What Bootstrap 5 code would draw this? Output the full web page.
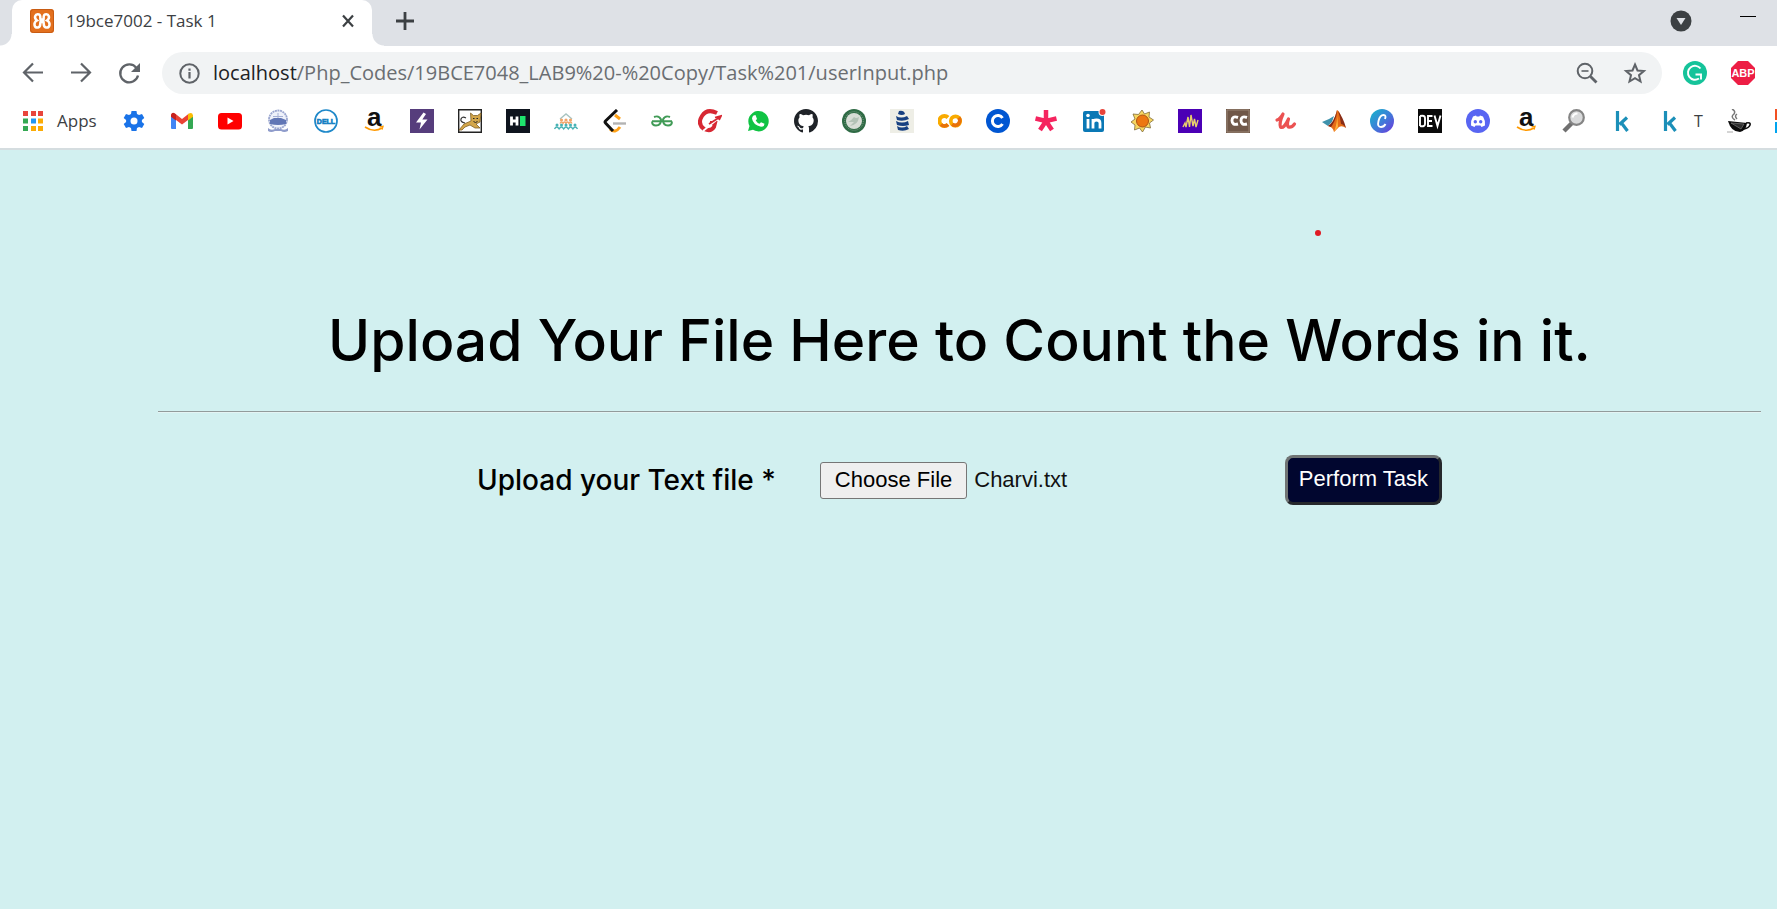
<!DOCTYPE html>
<html lang="en">
<head>
<meta charset="utf-8">
<meta name="viewport" content="width=device-width, initial-scale=1">
<title>19bce7002 - Task 1</title>
<link href="https://cdn.jsdelivr.net/npm/bootstrap@5.3.0/dist/css/bootstrap.min.css" rel="stylesheet">
<style>
  body { background: #d2f0f0; font-family: "Open Sans", "Noto Sans", sans-serif; color: #3c4043; overflow-x: hidden; }
  a { color: inherit; text-decoration: none; }
  svg { display: block; flex: none; }
  .plain { border: 0; background: none; padding: 0; color: #5f6368; }
  .tabstrip { background: #dee1e6; height: 46px; padding: 0 21px 0 12px; }
  .tab { position: relative; width: 360px; background: #fff; border-radius: 10px 10px 0 0; padding: 0 16px 4px 18px; font-size: 17px; }
  .tab::before, .tab::after { content: ""; position: absolute; bottom: 0; width: 12px; height: 12px; }
  .tab::before { left: -12px; background: radial-gradient(circle at 0 0, transparent 11px, #fff 12px); }
  .tab::after { right: -12px; background: radial-gradient(circle at 100% 0, transparent 11px, #fff 12px); }
  .toolbar { background: #fff; padding: 6px 22px 6px 21px; gap: 24px; }
  .omnibox { background: #f1f3f4; border-radius: 21px; height: 42px; padding: 0 15px; margin: 0 -3px; min-width: 0; }
  .address { font-size: 20px; line-height: 28px; color: #6a6e72; white-space: nowrap; overflow: hidden; }
  .address b { font-weight: 400; color: #202124; }
  .bookmarks { background: #fff; height: 50px; padding: 0 0 6px 21px; gap: 24px; overflow: hidden; border-bottom: 2px solid #d5dde0; font-size: 17px; }
  .bookmarks a { display: flex; align-items: center; gap: 12px; flex: none; }
  .apps-link { width: 77px; }
  .tee { width: 9px; font-size: 16px; }
  .task { position: relative; padding: 157px 16px 0 158px; color: #000; }
  .title { font: 500 57px/68px Inter, "Open Sans", sans-serif; margin: 0; }
  .rule { height: 2px; margin: 36px 0 42px; border: 0; border-top: 1px solid #929b9b; border-bottom: 1px solid #e4f4f4; opacity: 1; }
  .upload-row { gap: 44px; }
  .field-label { font: 500 28px/36px Inter, "Open Sans", sans-serif; }
  .picker { width: 421px; font: 22px/30px "Liberation Sans", Arial, sans-serif; color: #111; }
  .picker::file-selector-button { font: inherit; border: 1px solid #767676; border-radius: 3px; background: #efefef; color: #000; padding: 2px 14px 3px; margin-right: 7px; height: 37px; }
  .submit { font: 22px/28px "Liberation Sans", Arial, sans-serif; background: #01062f; color: #fff; border: 3px solid; border-color: #707474 #26282c #26282c #707474; border-radius: 8px; padding: 7px 11px 9px; white-space: nowrap; }
  .pen-dot { position: absolute; left: 74%; top: 80px; width: 6px; height: 6px; border-radius: 50%; background: #e01b24; }
  svg text { font-family: "Liberation Sans", Arial, sans-serif; font-weight: 700; }
</style>
</head>
<body>
<header>
  <div class="tabstrip d-flex align-items-stretch">
    <div class="tab d-flex align-items-center">
      <svg width="24" height="24" viewBox="0 0 24 24"><rect width="24" height="24" rx="3" fill="#e3701e"/><rect x=".5" y=".5" width="23" height="23" rx="3" fill="none" stroke="#c75b13"/><path d="M9 5.500C5 4.500 3.500 9 7 11.500 3 13.500 4 19 8 18.500 11 18 10 14.500 10.500 13h3c.5 1.500-.5 5 2.500 5.500 4 .5 5-5 1-7C20.500 9 19 4.500 15 5.500c-2 .5-1 3.500-1.500 5h-3C10 9 11 6 9 5.500z" fill="none" stroke="#fff" stroke-width="2.500"/></svg>
      <span class="ms-2 ps-1 flex-grow-1">19bce7002 - Task 1</span>
      <button class="plain" aria-label="Close tab"><svg width="16" height="16" viewBox="0 0 16 16"><path d="M3 2.500l10 11M13 2.500L3 13.500" stroke="#3c4043" stroke-width="2.200"/></svg></button>
    </div>
    <button class="plain ms-4" aria-label="New tab"><svg width="18" height="24" viewBox="0 0 18 24"><path d="M9 1v18M0 10h18" stroke="#3c4043" stroke-width="2.800"/></svg></button>
    <button class="plain ms-auto me-5" aria-label="Search tabs"><svg width="22" height="26" viewBox="0 0 22 26"><circle cx="11" cy="11" r="10.500" fill="#3c4043"/><path d="M6.500 8h9L11 15z" fill="#dee1e6"/></svg></button>
    <button class="plain" aria-label="Minimize"><svg width="16" height="32" viewBox="0 0 16 32"><path d="M0 9.500h16" stroke="#000"/></svg></button>
  </div>

  <div class="toolbar d-flex align-items-center">
    <button class="plain" aria-label="Back"><svg width="24" height="24" viewBox="0 0 24 24"><path d="M22 11.500H3.500M12 2.500l-9 9 9 9" fill="none" stroke="#5f6368" stroke-width="2.200"/></svg></button>
    <button class="plain" aria-label="Forward"><svg width="24" height="24" viewBox="0 0 24 24"><path d="M2 11.500h18.500M12 2.500l9 9-9 9" fill="none" stroke="#5f6368" stroke-width="2.200"/></svg></button>
    <button class="plain" aria-label="Reload"><svg width="24" height="24" viewBox="0 0 24 24"><path d="M21 14.500A9 9 0 1 1 19.500 7" fill="none" stroke="#5f6368" stroke-width="2.300"/><path d="M23 2v9h-9z" fill="#5f6368"/></svg></button>
    <div class="omnibox d-flex align-items-center flex-grow-1">
      <svg width="24" height="24" viewBox="0 0 24 24"><circle cx="12.500" cy="12.500" r="9.200" fill="none" stroke="#5f6368" stroke-width="2"/><path d="M12.500 11v6.500M12.500 7.500v2.200" stroke="#5f6368" stroke-width="2.200"/></svg>
      <span class="address ms-2 ps-1 me-auto"><b>localhost</b>/Php_Codes/19BCE7048_LAB9%20-%20Copy/Task%201/userInput.php</span>
      <button class="plain me-4" aria-label="Zoom"><svg width="24" height="24" viewBox="0 0 24 24"><circle cx="10" cy="10" r="7.300" fill="none" stroke="#5f6368" stroke-width="2"/><path d="M6.500 10h7" stroke="#5f6368" stroke-width="1.600"/><path d="M15.500 15.500l6 6" stroke="#5f6368" stroke-width="2.800"/></svg></button>
      <button class="plain" aria-label="Bookmark this tab"><svg width="24" height="24" viewBox="0 0 24 24"><path d="M12 3.500l2.500 6 6.400.5-4.900 4.200 1.500 6.300-5.500-3.400-5.500 3.400L8 14.200 3.100 10l6.400-.5z" fill="none" stroke="#5f6368" stroke-width="2"/></svg></button>
    </div>
    <button class="plain" aria-label="Grammarly"><svg width="24" height="24" viewBox="0 0 24 24"><circle cx="12" cy="12" r="12" fill="#15c39a"/><path d="M17.500 7.500A7 7 0 1 0 16 17.500M12.500 13.500H18v5" fill="none" stroke="#fff" stroke-width="1.900"/></svg></button>
    <button class="plain" aria-label="Adblock Plus"><svg width="24" height="24" viewBox="0 0 24 24"><path d="M7 0h10l7 7v10l-7 7H7l-7-7V7z" fill="#ed1e45"/><text x="12" y="16" font-size="11" text-anchor="middle" fill="#fff">ABP</text></svg></button>
  </div>

  <nav class="bookmarks d-flex align-items-center" aria-label="Bookmarks">
    <a class="apps-link" href="#"><svg width="24" height="24" viewBox="0 0 24 24"><path d="M2 2h5v5H2zM10 2h5v5h-5zM17 2h5v5h-5z" fill="#e8453c"/><path d="M2 9.500h5v5H2zM2 17h5v5H2z" fill="#34a853"/><path d="M10 9.500h5v5h-5z" fill="#2196f3"/><path d="M17 9.500h5v5h-5zM10 17h5v5h-5zM17 17h5v5h-5z" fill="#fbab05"/></svg>Apps</a>
    <a href="#" aria-label="Settings"><svg width="24" height="24" viewBox="0 0 24 24"><path d="M9.500 2h5l.5 3 2 1 3-1 2.300 4-2.400 2v2l2.400 2-2.300 4-3-1-2 1-.5 3h-5L9 19l-2-1-3 1-2.300-4 2.400-2v-2L1.700 9 4 5l3 1 2-1z" fill="#1a73e8"/><circle cx="12" cy="12" r="3.500" fill="#fff"/></svg></a>
    <a href="#" aria-label="Gmail"><svg width="24" height="24" viewBox="0 0 24 24"><path d="M1 6v13q0 1 1 1h4V10z" fill="#4285f4"/><path d="M18 20h4q1 0 1-1V6l-5 4z" fill="#34a853"/><path d="M1 6q1-3 4-1.500l7 5.500 7-5.500L18 11l-6 4.500L6 11l-5-3.500z" fill="#ea4335"/><path d="M18 5.200q4-3 5 1v1.500L18 11.500z" fill="#fbbc04"/><path d="M1 6q1-3 3-2L6 5.500v6L1 7.700z" fill="#c5221f"/></svg></a>
    <a href="#" aria-label="YouTube"><svg width="24" height="24" viewBox="0 0 24 24"><rect y="4" width="24" height="16.500" rx="3.500" fill="#f00"/><path d="M9.500 8.500l6 3.500-6 3.500z" fill="#fff"/></svg></a>
    <a href="#" aria-label="University"><svg width="24" height="24" viewBox="0 0 24 24"><circle cx="12" cy="10.500" r="9" fill="#eef1fa" stroke="#9ba7d0" stroke-width="1.800" stroke-dasharray="2 .6"/><path d="M4 11l4-2h7l5 2v4q-8 2-16 0z" fill="#6176b5"/><path d="M7 7.500h10M12 4v5" stroke="#a5b0d5"/><path d="M2 19q3 3 7 1h6q4 2 7-1v3q-4 2-7 0H9q-4 2-7 0z" fill="#8f9ccb"/></svg></a>
    <a href="#" aria-label="Dell"><svg width="24" height="24" viewBox="0 0 24 24"><circle cx="12" cy="12" r="11" fill="#fff" stroke="#1e88c9" stroke-width="1.700"/><text x="12" y="14.500" font-size="7" text-anchor="middle" fill="#0f7dc2" stroke="#0f7dc2" stroke-width=".6">DELL</text></svg></a>
    <a href="#" aria-label="Amazon"><svg width="24" height="24" viewBox="0 0 24 24"><text x="5" y="17" font-size="26" fill="#111">a</text><path d="M3 18q9 6 17 1" fill="none" stroke="#f90" stroke-width="1.600"/><path d="M17.500 17.800l3.600-.5-1 3.400" fill="none" stroke="#f90" stroke-width="1.200"/></svg></a>
    <a href="#" aria-label="Bolt"><svg width="24" height="24" viewBox="0 0 24 24"><path d="M0 0h24v24H0z" fill="#563d7c"/><path d="M13.500 3.500L6 13.500h5L9.500 20.500 17.500 10.500h-5.200L16 5z" fill="#fff"/></svg></a>
    <a href="#" aria-label="Tomcat"><svg width="24" height="24" viewBox="0 0 24 24"><path d="M.7.7h22.600v22.600H.7z" fill="#fff" stroke="#222" stroke-width="1.400"/><path d="M12.500 4l3 2.500h4L23 4l-1 9-4 2 4 4h-5l-5-3-5 2-3 3H1l5-6 7-3z" fill="#d3a64a" stroke="#806126" stroke-width=".8"/><path d="M7 14q-5-1-4-4t5-1" fill="none" stroke="#333" stroke-width="1.200"/><path d="M15 9.500h1.500M18.500 9.500H20M15.500 12.500l2 1 2-1" stroke="#222" fill="none"/></svg></a>
    <a href="#" aria-label="HackerRank"><svg width="24" height="24" viewBox="0 0 24 24"><path d="M0 0h24v24H0z" fill="#0e141e"/><path d="M5.500 7.500v9M11 7.500v9M5.500 12H11" stroke="#fff" stroke-width="2.800"/><path d="M14 7h5.500v10H14z" fill="#1ee46d"/></svg></a>
    <a href="#" aria-label="Courses"><svg width="24" height="24" viewBox="0 0 24 24"><path d="M6 10l6-5 6 5" fill="none" stroke="#a9c4c1" stroke-width="1.400"/><g fill="#f2a56a"><circle cx="7.500" cy="11" r="1.600"/><circle cx="12" cy="11" r="1.600"/><circle cx="16.500" cy="11" r="1.600"/></g><path d="M6 14.500q1.500-3 3 0 1.500-3 3 0 1.500-3 3 0 1.500-3 3 0" fill="none" stroke="#f2a56a" stroke-width="1.300"/><g fill="#48b2b4"><circle cx="3" cy="16" r="1.500"/><circle cx="7.500" cy="16" r="1.500"/><circle cx="12" cy="16" r="1.500"/><circle cx="16.500" cy="16" r="1.500"/><circle cx="21" cy="16" r="1.500"/></g><path d="M.5 20q2.300-4 4.600 0 2.300-4 4.600 0 2.300-4 4.600 0 2.300-4 4.600 0 2.300-4 4.600 0" fill="none" stroke="#48b2b4" stroke-width="1.300"/></svg></a>
    <a href="#" aria-label="LeetCode"><svg width="24" height="24" viewBox="0 0 24 24"><path d="M13 6l5 4M8 20q5 5 10-2" fill="none" stroke="#ffa116" stroke-width="3"/><path d="M15 1L3.500 12q-1 1 0 2L11 22" fill="none" stroke="#111" stroke-width="3"/><path d="M11 14.500h13" stroke="#b3b3b3" stroke-width="2.400"/></svg></a>
    <a href="#" aria-label="GeeksforGeeks"><svg width="24" height="24" viewBox="0 0 24 24"><path d="M2 12.200h20M4 8q5-2 7 2.500 0 6-5 6-4 0-4-4M20 8q-5-2-7 2.500 0 6 5 6 4 0 4-4" fill="none" stroke="#419b57" stroke-width="1.900"/></svg></a>
    <a href="#" aria-label="Guvi"><svg width="24" height="24" viewBox="0 0 24 24"><path d="M19 4Q9-1 4 7T6 20q7 3 10-2l1-4h-5" fill="none" stroke="#d72833" stroke-width="4"/><path d="M5 22L22 8" stroke="#fff" stroke-width="1.800"/><path d="M11 15L22 8M17 8.500l6-1.500-2 4" fill="none" stroke="#d72833" stroke-width="1.800"/></svg></a>
    <a href="#" aria-label="WhatsApp"><svg width="24" height="24" viewBox="0 0 24 24"><path d="M2 22l1.500-5A10.200 10.200 0 1 1 7 20.800z" fill="#10c344"/><path d="M7.500 6.500l2-.5 1.500 4-1.300 1.500q1.500 2.500 3.800 3.200l1.500-1.500 3.500 1.600q0 3-3.500 3Q7 16 6 9.500 6.200 7.500 7.500 6.500z" fill="#fff"/></svg></a>
    <a href="#" aria-label="GitHub"><svg width="24" height="24" viewBox="0 0 16 16"><path fill="#1f2328" d="M8 0C3.580 0 0 3.580 0 8c0 3.540 2.290 6.530 5.470 7.590.4.070.55-.17.55-.38 0-.19-.01-.82-.01-1.490-2.010.37-2.530-.49-2.690-.94-.09-.23-.48-.94-.82-1.130-.28-.15-.68-.52-.01-.53.63-.01 1.080.58 1.230.82.72 1.210 1.870.87 2.330.66.07-.52.28-.87.51-1.070-1.780-.2-3.640-.89-3.640-3.950 0-.87.31-1.590.82-2.150-.08-.2-.36-1.020.08-2.120 0 0 .67-.21 2.200.82a7.600 7.600 0 0 1 4 0c1.530-1.040 2.200-.82 2.200-.82.44 1.100.16 1.920.08 2.120.51.56.82 1.270.82 2.150 0 3.070-1.870 3.750-3.650 3.950.29.25.54.73.54 1.480 0 1.070-.01 1.930-.01 2.200 0 .21.15.46.55.38A8 8 0 0 0 16 8c0-4.420-3.580-8-8-8z"/></svg></a>
    <a href="#" aria-label="Emblem"><svg width="24" height="24" viewBox="0 0 24 24"><circle cx="12" cy="12" r="12" fill="#2f6b45"/><circle cx="12" cy="12" r="9.300" fill="none" stroke="#7d9c86" stroke-dasharray="1 1"/><circle cx="12" cy="12" r="8" fill="#d8ddd6"/><path d="M6 13q4-2 6-5 2 2 5 0-1 8-9 9l4-4z" fill="#b3c2b6"/></svg></a>
    <a href="#" aria-label="Database"><svg width="24" height="24" viewBox="0 0 24 24"><path d="M0 0h24v24H0z" fill="#eeeee6"/><path d="M9 2q5-1 6 3-3 2-7 0zM6 7q5 3 11 0l2 3q-6 3-12 1zM6 12q6 3 12 0l1 4q-6 2-12 0zM7 17q5 3 10 0l2 3q-5 3-11 1z" fill="#174081"/></svg></a>
    <a href="#" aria-label="Colab"><svg width="24" height="24" viewBox="0 0 24 24"><path d="M10 8.500A5 5 0 1 0 10 15.500" fill="none" stroke="#f9ab00" stroke-width="4"/><circle cx="17.500" cy="12" r="4.700" fill="none" stroke="#f9ab00" stroke-width="3.700"/><path d="M14.200 15.300A4.700 4.700 0 0 0 20.800 8.700M3 15.500A5 5 0 0 0 10 15.500" fill="none" stroke="#e8710a" stroke-width="3.700"/></svg></a>
    <a href="#" aria-label="Coursera"><svg width="24" height="24" viewBox="0 0 24 24"><circle cx="12" cy="12" r="12" fill="#0056d2"/><path d="M16.500 9A5.500 5.500 0 1 0 16.500 15" fill="none" stroke="#fff" stroke-width="3"/></svg></a>
    <a href="#" aria-label="Asterisk"><svg width="24" height="24" viewBox="0 0 24 24"><path d="M12 12V1M12 12L1.500 9.500M12 12l10.500-2.500M12 12l6 9M12 12l-6 9" stroke="#f5245f" stroke-width="4.500"/></svg></a>
    <a href="#" aria-label="LinkedIn"><svg width="24" height="24" viewBox="0 0 24 24"><rect x="1" y="2" width="21" height="21" rx="2" fill="#0a78b5"/><path d="M6 10v9.500M11 10v9.500M11 14q0-3 3.500-3t3.500 3v5.500" fill="none" stroke="#fff" stroke-width="2.800"/><circle cx="6" cy="6.500" r="1.800" fill="#fff"/><circle cx="20.500" cy="3" r="4" fill="#fff"/><circle cx="20.500" cy="3" r="3" fill="#e8443a"/></svg></a>
    <a href="#" aria-label="Sun"><svg width="24" height="24" viewBox="0 0 24 24"><path d="M12 1l2.500 4 5-2-.5 5 4.500 3-4 3 1 5-5-1-3 5-3-4-5 2 .5-5L1 13l4-3-2-5 5.500.5z" fill="#f6d660" stroke="#806c3b" stroke-width=".8"/><circle cx="12.500" cy="12" r="6" fill="#ed7711" stroke="#ae5312"/></svg></a>
    <a href="#" aria-label="Audio"><svg width="24" height="24" viewBox="0 0 24 24"><path d="M0 0h24v24H0z" fill="#4b00b5"/><path d="M5 18l2-4 1 4 2-10 1.500 10L13 6l2 11 1.500-7 1.500 8 2-7" fill="none" stroke="#e9d06b" stroke-width="1.400"/></svg></a>
    <a href="#" aria-label="CodeChef"><svg width="24" height="24" viewBox="0 0 24 24"><path d="M0 0h24v24H0z" fill="#705849"/><path d="M1 1h22v22H1z" fill="none" stroke="#9a8677"/><path d="M12 8.500Q6 6.500 6 11.500T12 15M21 8.500q-6-2-6 3T21 15" fill="none" stroke="#fff" stroke-width="2.900"/></svg></a>
    <a href="#" aria-label="Udemy"><svg width="24" height="24" viewBox="0 0 24 24"><path d="M3 11q3-1 6-6Q5 14 6.500 18q3.500 2 8-8-2 6 0 8 3 1 6-3" fill="none" stroke="#eb5252" stroke-width="3.200" stroke-linejoin="round" stroke-linecap="round"/></svg></a>
    <a href="#" aria-label="MATLAB"><svg width="24" height="24" viewBox="0 0 24 24"><path d="M0 13l7-3 5-3-2 6-4 4z" fill="#3f92ac"/><path d="M6 17q6-3 9-16 3 1 4 8l5 10q-4-3-7-1l-5 5q-1-5-6-6z" fill="#e66b17"/><path d="M15 1q0 6-2.500 11T9 18l-3-1q6-3 9-16z" fill="#832817"/><path d="M15 3q1 9-3 20l4-5z" fill="#ffb43d"/><path d="M16 2q5 6 8 17-3-4-5-4-1-8-3-13z" fill="#8a2e18"/></svg></a>
    <a href="#" aria-label="Canva"><svg width="24" height="24" viewBox="0 0 24 24"><defs><linearGradient id="cv" x1="0" y1="0" x2="1" y2="1"><stop stop-color="#13b8cb"/><stop offset=".5" stop-color="#3d7fd8"/><stop offset="1" stop-color="#6f35dc"/></linearGradient></defs><circle cx="12" cy="12" r="12" fill="url(#cv)"/><path d="M15 10q1.500-4-1.500-4-3.500 0-5 6t2.500 6q3 0 4.500-3" fill="none" stroke="#fff" stroke-width="1.900"/></svg></a>
    <a href="#" aria-label="DEV"><svg width="24" height="24" viewBox="0 0 24 24"><path d="M0 0h24v24H0z" fill="#0a0a0a"/><path d="M2 7v10M2 7q5-1 5 2v6q0 3-5 2M14.500 7H10v10h4.500M10 12h4M16.500 6.500L19.500 17 22.500 6.500" fill="none" stroke="#fff" stroke-width="1.900"/></svg></a>
    <a href="#" aria-label="Discord"><svg width="24" height="24" viewBox="0 0 24 24"><circle cx="12" cy="12" r="12" fill="#5865f2"/><path d="M7 7.500l3-1 .7 1h2.600l.7-1 3 1q2.500 4 2 9l-3.500 1.500-1-1.500h-5l-1 1.500L5 16.500q-.5-5 2-9z" fill="#fff"/><circle cx="9.300" cy="12.800" r="1.700" fill="#5865f2"/><circle cx="14.700" cy="12.800" r="1.700" fill="#5865f2"/></svg></a>
    <a href="#" aria-label="Amazon orders"><svg width="24" height="24" viewBox="0 0 24 24"><text x="5" y="17" font-size="26" fill="#111">a</text><path d="M3 18q9 6 17 1" fill="none" stroke="#f90" stroke-width="1.600"/><path d="M17.500 17.800l3.600-.5-1 3.400" fill="none" stroke="#f90" stroke-width="1.200"/></svg></a>
    <a href="#" aria-label="Search"><svg width="24" height="24" viewBox="0 0 24 24"><path d="M10 14l-8 8" stroke="#707070" stroke-width="4.500"/><circle cx="14.500" cy="8.500" r="7.300" fill="#d9dadb" stroke="#858585" stroke-width="2.200"/><path d="M10.500 8.500q1-4 5-4" fill="none" stroke="#fff" stroke-width="2"/></svg></a>
    <a href="#" aria-label="Kaggle"><svg width="24" height="24" viewBox="0 0 24 24"><path d="M7.500 2v20M17 8.500L9.500 15.500M11.500 14l6 8" fill="none" stroke="#1b8fb8" stroke-width="3.200"/></svg></a>
    <a href="#"><svg width="24" height="24" viewBox="0 0 24 24"><path d="M7.500 2v20M17 8.500L9.500 15.500M11.500 14l6 8" fill="none" stroke="#1b8fb8" stroke-width="3.200"/></svg><span class="tee">T</span></a>
    <a href="#" aria-label="Java"><svg width="24" height="24" viewBox="0 0 24 24"><path d="M8 11Q3 8 7 5q2-3-2-5M10 10q-3-3 0-5" fill="none" stroke="#777" stroke-width="1.500"/><path d="M1 12l19 2q-1 8-7 9-9 0-12-11z" fill="#0b0b0b"/><path d="M19 14q5-1 4 2t-6 4" fill="none" stroke="#111" stroke-width="1.600"/><path d="M4 14l13 1-3 5z" fill="#2f2f2f" stroke="#888" stroke-width=".6"/><path d="M0 23h6" stroke="#aaa"/></svg></a>
    <a href="#" aria-label="Microsoft"><svg width="24" height="24" viewBox="0 0 24 24"><path d="M0 0h11v11H0z" fill="#f25022"/><path d="M13 0h11v11H13z" fill="#7fba00"/><path d="M0 13h11v11H0z" fill="#00a4ef"/><path d="M13 13h11v11H13z" fill="#ffb900"/></svg></a>
  </nav>
</header>

<main class="task">
  <span class="pen-dot"></span>
  <h1 class="title text-center">Upload Your File Here to Count the Words in it.</h1>
  <hr class="rule">
  <form class="upload-row d-flex justify-content-center align-items-center" onsubmit="return false">
    <label class="field-label" for="textFile">Upload your Text file *</label>
    <input class="picker" type="file" id="textFile" accept=".txt">
    <button class="submit" type="submit">Perform Task</button>
  </form>
</main>

<script src="https://cdn.jsdelivr.net/npm/bootstrap@5.3.0/dist/js/bootstrap.bundle.min.js"></script>
<script>
  // Preselect the sample text file in the picker
  const chosen = new DataTransfer();
  chosen.items.add(new File(["Charvi"], "Charvi.txt", { type: "text/plain" }));
  document.getElementById("textFile").files = chosen.files;
</script>
</body>
</html>
